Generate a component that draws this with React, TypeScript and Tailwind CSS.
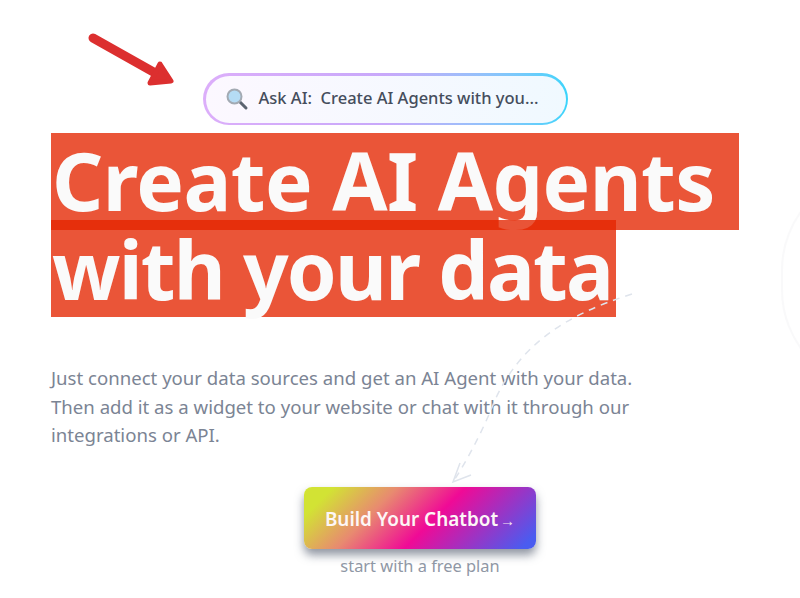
export default function App() {
  return (
    <div className="relative w-[800px] h-[598px] overflow-hidden bg-white font-['Noto_Sans',sans-serif]">
      {/* faint circle at the right */}
      <div className="absolute left-[781px] top-[170px] w-[200px] h-[220px] rounded-full border-2 border-gray-100/50" />
      {/* red arrow */}
      <svg className="absolute left-[85px] top-[30px]" width="95" height="60" viewBox="0 0 95 60" fill="none">
        <path d="M8 8 L72 44" stroke="#dc2f2f" strokeWidth="9" strokeLinecap="round" />
        <path d="M75 34 L86 51 L65 53 Z" fill="#dc2f2f" stroke="#dc2f2f" strokeWidth="5" strokeLinejoin="round" />
      </svg>
      {/* dashed arrow */}
      <svg className="absolute left-[445px] top-[285px] z-10" width="195" height="200" viewBox="0 0 195 200" fill="none" stroke="#dfe4ec" strokeWidth="1.5">
        <path d="M187 9 C120 30 75 60 50 115 C38 145 25 170 10 194" strokeDasharray="7 6" />
        <path d="M15 178 L8 197 L26 190" />
      </svg>

      <div className="flex flex-col pt-[73px] pl-[51px]">
        <div className="ml-[152px] w-[365px] h-[52px] rounded-[26px] p-[2.5px] bg-gradient-to-r from-[#dcaefa] via-[#c8a8fa] to-[#38d4fb]">
          <div className="flex h-full items-center rounded-[24px] bg-gradient-to-r from-[#fcf8ff] to-[#f0f9ff] pl-[19px]">
            <svg width="24" height="24" viewBox="0 0 24 24" fill="none">
              <path d="M14 14 L21 21" stroke="#5b6470" strokeWidth="3" strokeLinecap="round" />
              <circle cx="9.5" cy="9.5" r="7" fill="#b5dcf5" stroke="#a3aab3" strokeWidth="2" />
            </svg>
            <span className="ml-[10px] mb-[2px] text-[16.5px] font-medium text-[#454d5c] whitespace-pre">Ask AI:  Create AI Agents with you...</span>
          </div>
        </div>

        <h1 className="mt-[8px] text-[80px] font-bold text-[#fafafa] whitespace-nowrap">
          <span className="relative block w-[688px] h-[97px] bg-[#e42500]/78 pl-[1px] leading-[93px] tracking-[-0.6px]">Create AI Agents</span>
          <span className="relative block w-[565px] h-[97px] -mt-[10px] bg-[#e42500]/78 pl-[1px] leading-[97px] tracking-[-1.8px]">with your data</span>
        </h1>

        <p className="mt-[47px] w-[620px] text-[18.6px] leading-[28.5px] text-[#7b8494]">
          Just connect your data sources and get an AI Agent with your data.
          <br />
          Then add it as a widget to your website or chat with it through our
          <br />
          integrations or API.
        </p>

        <div className="ml-[253px] mt-[37px] flex h-[62px] w-[232px] items-center justify-center rounded-[8px] pt-[3px] bg-[linear-gradient(135deg,#d2e334_10%,#e88a70_32%,#f00a96_55%,#4a5cf0_95%)] shadow-[0_6px_10px_rgba(70,80,100,0.6)]">
          <span className="text-[18.9px] font-semibold text-[#fdf6f6]">Build Your Chatbot</span>
          <span className="ml-[2px] mt-[3px] text-[15px] text-[#f6e6f0]">→</span>
        </div>
        <div className="ml-[253px] mt-[5px] w-[232px] text-center text-[16.4px] text-[#8f97a5]">start with a free plan</div>
      </div>
    </div>
  );
}
